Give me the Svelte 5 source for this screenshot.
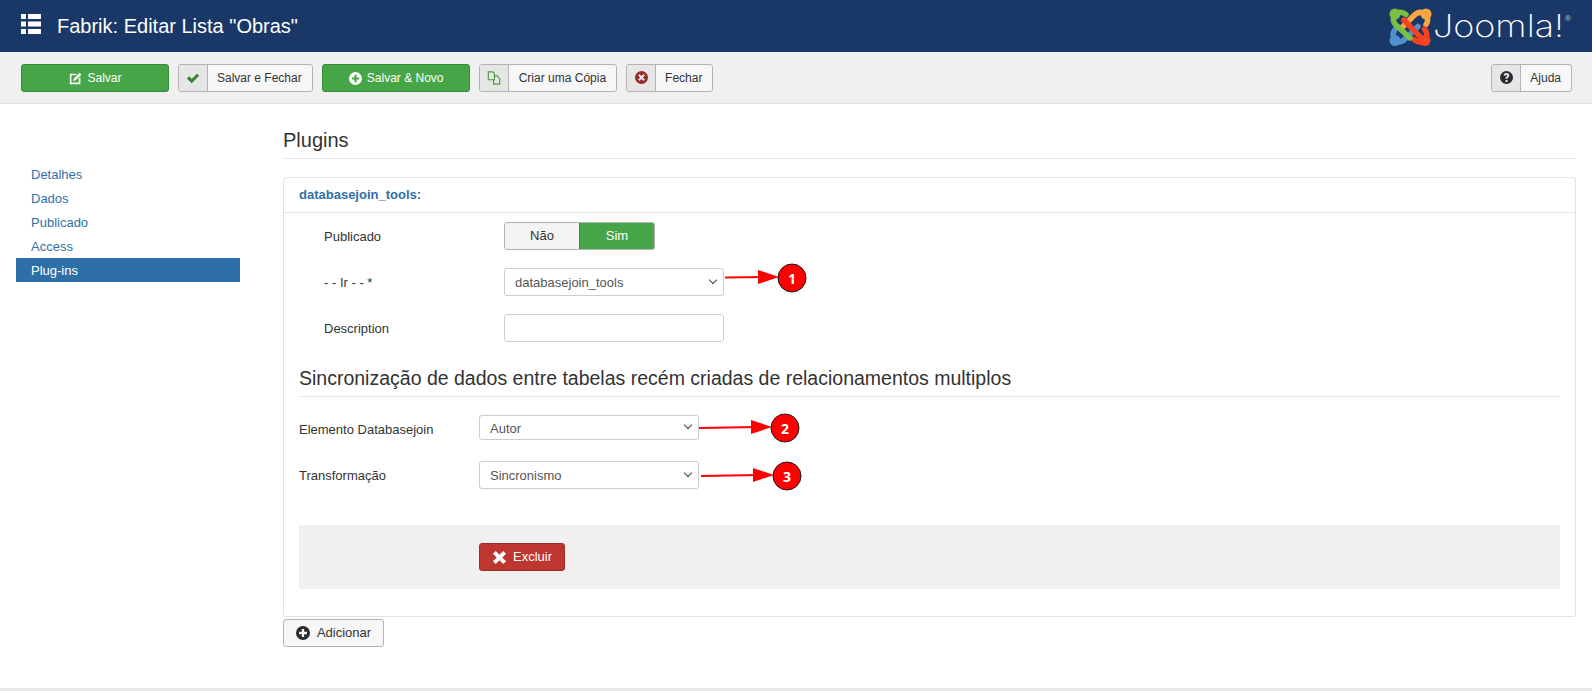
<script>
  const nav = ['Detalhes', 'Dados', 'Publicado', 'Access', 'Plug-ins'];
  const notes = [
    { n: 1, x1: 725, y1: 277.5, x2: 778, y2: 277, cx: 792, cy: 278 },
    { n: 2, x1: 699, y1: 428, x2: 771, y2: 427, cx: 785, cy: 428 },
    { n: 3, x1: 701, y1: 476, x2: 773, y2: 475, cx: 787, cy: 476 }
  ];
</script>

<div class="page">
  <header class="top">
    <svg class="menu-ico" viewBox="0 0 20 20" width="20" height="20" aria-hidden="true">
      <path fill="#fff" d="M0 0h5v5H0zM7 0h13v5H7zM0 7.500h5v5H0zM7 7.500h13v5H7zM0 15h5v5H0zM7 15h13v5H7z" />
    </svg>
    <h1>Fabrik: Editar Lista "Obras"</h1>
    <svg class="logo" viewBox="0 0 195 44" width="195" height="44" role="img" aria-label="Joomla!">
      <g fill="none" stroke-width="5.500" stroke-linecap="round">
        <path stroke="#5091cd" d="M10 36.500C7.500 33 7.500 29 10 25.500M10 36.500C14 39 17 38 20 35L33 22.500" />
        <circle cx="10" cy="36.500" r="5.500" fill="#5091cd" />
        <path stroke="#f9a541" d="M41 10C36 7 32 8.500 29 11.500L17 23.500M41 10C43.500 14 43.500 17 41 20.500" />
        <circle cx="41" cy="10" r="5.500" fill="#f9a541" />
        <path stroke="#f44321" d="M19 16L32 29.500C35 33 37 35 40 36.500M40 36.500C36 39.500 32 38 29 35.500M40 36.500C42.500 33 42.500 28 39.500 25" />
        <circle cx="40" cy="36.500" r="5.500" fill="#f44321" />
        <path stroke="#7ac143" d="M10 10C14 7.500 18 8 21 10.500M10 10C7.500 14 8 18 11 21L25 34" />
        <circle cx="10" cy="10" r="5.500" fill="#7ac143" />
      </g>
      <text class="word" x="48" y="33" textLength="131" lengthAdjust="spacingAndGlyphs">Joomla!</text>
      <text class="reg" x="180" y="17">®</text>
    </svg>
  </header>

  <div class="toolbar">
    <button class="btn green wide">
      <svg viewBox="0 0 16 16" width="13" height="13" aria-hidden="true"><path fill="#fff" d="M1 2H10L8 4H3v9h9V8l2-2v9H1zM6 8l7-7 2.300 2.300-7 7L5 11z" /></svg>
      Salvar
    </button>
    <button class="btn split">
      <span class="ico"><svg viewBox="0 0 16 16" width="14" height="14" aria-hidden="true"><path fill="#378137" d="M1 8.500l2.500-2.500 3 3L12.500 3 15 5.500 6.500 14z" /></svg></span>
      <span class="lab">Salvar e Fechar</span>
    </button>
    <button class="btn green wide">
      <svg viewBox="0 0 16 16" width="13" height="13" aria-hidden="true"><path fill="#fff" fill-rule="evenodd" d="M8 0a8 8 0 110 16A8 8 0 018 0zM6.700 3.500v3.200H3.500v2.600h3.200v3.200h2.600V9.300h3.200V6.700H9.300V3.500z" /></svg>
      Salvar &amp; Novo
    </button>
    <button class="btn split copy">
      <span class="ico"><svg viewBox="0 0 16 16" width="14" height="14" aria-hidden="true"><path fill="none" stroke="#4f9a3f" stroke-width="1.300" d="M1.500 1h5l2 2v7h-7zM8.500 5.500h3l3 3V15h-7v-5" /></svg></span>
      <span class="lab">Criar uma Cópia</span>
    </button>
    <button class="btn split">
      <span class="ico"><svg viewBox="0 0 16 16" width="13" height="13" aria-hidden="true"><path fill="#942a25" fill-rule="evenodd" d="M8 0a8 8 0 110 16A8 8 0 018 0zM5.600 3.800L3.800 5.600 6.200 8l-2.400 2.400 1.800 1.800L8 9.800l2.400 2.400 1.800-1.800L9.800 8l2.400-2.400-1.800-1.800L8 6.200z" /></svg></span>
      <span class="lab">Fechar</span>
    </button>
    <button class="btn split help">
      <span class="ico"><svg viewBox="0 0 16 16" width="13" height="13" aria-hidden="true"><path fill="#282c33" fill-rule="evenodd" d="M8 0a8 8 0 110 16A8 8 0 018 0zM6.800 11.200v2.200h2.400v-2.200zM8 2.600c-2 0-3.300 1-3.500 2.900l2.200.3c.1-.8.5-1.200 1.200-1.200s1.100.4 1.100 1c0 .5-.3.800-1 1.300-.9.700-1.200 1.200-1.200 2.300v.4h2.300v-.3c0-.5.200-.8.900-1.300 1-.7 1.400-1.400 1.400-2.500 0-1.800-1.300-2.900-3.400-2.900z" /></svg></span>
      <span class="lab">Ajuda</span>
    </button>
  </div>

  <div class="content">
    <nav class="side">
      {#each nav as item, i}
        <a href="#{item}" class:active={i === nav.length - 1}>{item}</a>
      {/each}
    </nav>

    <main class="main">
      <h2 class="title">Plugins</h2>
      <section class="panel">
        <div class="panel-head">databasejoin_tools:</div>
        <div class="panel-body">
          <div class="rows top-rows">
            <div class="row">
              <div class="label">Publicado</div>
              <div class="toggle"><span class="off">Não</span><span class="on">Sim</span></div>
            </div>
            <div class="row">
              <div class="label">- - Ir - - *</div>
              <div class="sel">databasejoin_tools</div>
            </div>
            <div class="row">
              <div class="label">Description</div>
              <div class="inp"></div>
            </div>
          </div>
          <h3 class="sub">Sincronização de dados entre tabelas recém criadas de relacionamentos multiplos</h3>
          <div class="rows low-rows">
            <div class="row">
              <div class="label">Elemento Databasejoin</div>
              <div class="sel short">Autor</div>
            </div>
            <div class="row">
              <div class="label">Transformação</div>
              <div class="sel">Sincronismo</div>
            </div>
          </div>
          <div class="band">
            <button class="btn red">
              <svg viewBox="0 0 16 16" width="15" height="15" aria-hidden="true"><path fill="#fff" d="M4 1l4 4 4-4 3 3-4 4 4 4-3 3-4-4-4 4-3-3 4-4-4-4z" /></svg>
              Excluir
            </button>
          </div>
        </div>
      </section>
      <button class="btn add">
        <svg viewBox="0 0 16 16" width="14" height="14" aria-hidden="true"><path fill="#282c33" fill-rule="evenodd" d="M8 0a8 8 0 110 16A8 8 0 018 0zM6.700 3.500v3.200H3.500v2.600h3.200v3.200h2.600V9.300h3.200V6.700H9.300V3.500z" /></svg>
        Adicionar
      </button>
    </main>
  </div>
  <div class="foot"></div>

  <svg class="notes" width="1592" height="691" aria-hidden="true">
    {#each notes as a}
      <line x1={a.x1} y1={a.y1} x2={a.x2 - 14} y2={a.y2} stroke="#f00" stroke-width="2" />
      <polygon points="{a.x2 - 20},{a.y2 - 7} {a.x2 + 1},{a.y2} {a.x2 - 20},{a.y2 + 7}" fill="#f00" />
      <circle cx={a.cx} cy={a.cy} r="14" fill="#f00" stroke="#1c1c1c" stroke-width="1" />
      <text x={a.cx} y={a.cy + 6} text-anchor="middle">{a.n}</text>
    {/each}
  </svg>
</div>

<style>
  :global(body) {
    margin: 0;
    background: #fff;
  }
  .page {
    position: relative;
    width: 1592px;
    height: 691px;
    overflow: hidden;
    font-family: "Liberation Sans", Arial, sans-serif;
    font-size: 13px;
    line-height: 18px;
    color: #333;
  }
  .top {
    height: 52px;
    background: #1a3867;
    display: flex;
    align-items: center;
    padding-left: 21px;
    box-sizing: border-box;
    color: #fff;
  }
  .menu-ico {
    margin-top: -4px;
  }
  h1 {
    margin: 0 0 0 16px;
    font-size: 20px;
    font-weight: 400;
    line-height: 52px;
    flex: 1;
  }
  .logo {
    margin-right: 12px;
  }
  .word {
    font-family: "Inter", "Lato", sans-serif;
    font-weight: 200;
    font-size: 31px;
    fill: #fff;
  }
  .reg {
    font-family: "Liberation Sans", Arial, sans-serif;
    font-size: 8px;
    fill: #c8ccd4;
  }
  .toolbar {
    height: 52px;
    box-sizing: border-box;
    background: #f0f0f0;
    border-bottom: 1px solid #e0e0e0;
    display: flex;
    align-items: flex-start;
    gap: 9px;
    padding: 12px 20px 0 21px;
  }
  .btn {
    box-sizing: border-box;
    height: 28px;
    border-radius: 3px;
    font: 12px/18px "Liberation Sans", Arial, sans-serif;
    padding: 0;
    display: inline-flex;
    align-items: center;
    justify-content: center;
    gap: 6px;
    border: 1px solid #b3b3b3;
    background: #f7f7f7;
    color: #333;
  }
  .green {
    background: #46a546;
    border-color: #3b8a3b;
    color: #fff;
  }
  .wide {
    width: 148px;
    padding-left: 1px;
    gap: 5px;
  }
  .split {
    gap: 0;
    align-items: stretch;
    overflow: hidden;
  }
  .ico {
    width: 29px;
    background: #e6e6e6;
    border-right: 1px solid #b3b3b3;
    display: flex;
    align-items: center;
    justify-content: center;
    padding-bottom: 1px;
    box-sizing: border-box;
  }
  .lab {
    padding: 0 10px 0 9px;
    display: flex;
    align-items: center;
  }
  .copy .lab {
    padding-left: 10px;
  }
  .help {
    margin-left: auto;
  }
  .content {
    display: flex;
    padding-top: 23px;
    height: 584px;
    box-sizing: border-box;
  }
  .side {
    width: 224px;
    margin-left: 16px;
    margin-right: 43px;
    padding-top: 35px;
    display: flex;
    flex-direction: column;
  }
  .side a {
    height: 24px;
    line-height: 26px;
    padding-left: 15px;
    color: #3071a9;
    text-decoration: none;
  }
  .side a.active {
    background: #2f6fa7;
    color: #fff;
  }
  .main {
    width: 1293px;
  }
  .title {
    margin: 0 0 18px;
    height: 30px;
    padding-top: 1px;
    font-size: 20px;
    font-weight: 400;
    line-height: 24px;
    color: #333;
    border-bottom: 1px solid #e5e5e5;
    box-sizing: content-box;
  }
  .panel {
    box-sizing: border-box;
    height: 440px;
    border: 1px solid #e3e3e3;
    border-radius: 3px;
  }
  .panel-head {
    height: 35px;
    box-sizing: border-box;
    border-bottom: 1px solid #e3e3e3;
    padding: 8px 15px;
    font-weight: 700;
    color: #3071a9;
  }
  .panel-body {
    padding: 9px 15px 0;
  }
  .rows {
    display: flex;
    flex-direction: column;
  }
  .top-rows {
    gap: 18px;
    padding-left: 25px;
  }
  .row {
    display: flex;
    align-items: center;
    min-height: 28px;
  }
  .top-rows .label {
    width: 180px;
    padding-top: 2px;
    box-sizing: border-box;
  }
  .low-rows .label {
    width: 180px;
    padding-top: 2px;
    box-sizing: border-box;
  }
  .toggle {
    display: flex;
    width: 151px;
    height: 28px;
    box-sizing: border-box;
    border-radius: 3px;
    overflow: hidden;
    border: 1px solid #b3b3b3;
    line-height: 26px;
    text-align: center;
  }
  .off {
    flex: 1;
    background: #f3f3f3;
  }
  .on {
    flex: 1;
    background: #46a546;
    color: #fff;
    margin: -1px -1px -1px 0;
    border: 1px solid #3b8a3b;
    border-radius: 0 3px 3px 0;
  }
  .sel,
  .inp {
    width: 220px;
    height: 28px;
    box-sizing: border-box;
    border: 1px solid #ccc;
    border-radius: 3px;
    background: #fff;
    color: #555;
    line-height: 28px;
    padding-left: 10px;
    position: relative;
  }
  .sel::after {
    content: "";
    position: absolute;
    right: 7px;
    top: 8px;
    width: 5px;
    height: 5px;
    border-right: 1.500px solid #444;
    border-bottom: 1.500px solid #444;
    transform: rotate(45deg);
  }
  .sel.short {
    height: 25px;
    line-height: 25px;
    align-self: flex-start;
  }
  .sel.short::after {
    top: 6px;
  }
  .sub {
    margin: 20px 0 18px;
    height: 35px;
    padding-top: 4px;
    box-sizing: border-box;
    border-bottom: 1px solid #e5e5e5;
    font-size: 19.500px;
    font-weight: 400;
    line-height: 24px;
  }
  .low-rows {
    gap: 18px;
  }
  .band {
    margin-top: 36px;
    height: 64px;
    background: #f0f0f0;
    box-sizing: border-box;
    padding: 18px 0 0 180px;
  }
  .red {
    width: 86px;
    background: #bd362f;
    border-color: #a02c26;
    color: #fff;
    font-size: 13px;
  }
  .add {
    margin-top: 2px;
    width: 101px;
    font-size: 13px;
    gap: 7px;
  }
  .foot {
    height: 3px;
    background: #e8e8e8;
  }
  .notes {
    position: absolute;
    left: 0;
    top: 0;
    pointer-events: none;
  }
  .notes text {
    font: 700 14px "Noto Sans", "DejaVu Sans", sans-serif;
    fill: #fff;
  }
</style>
